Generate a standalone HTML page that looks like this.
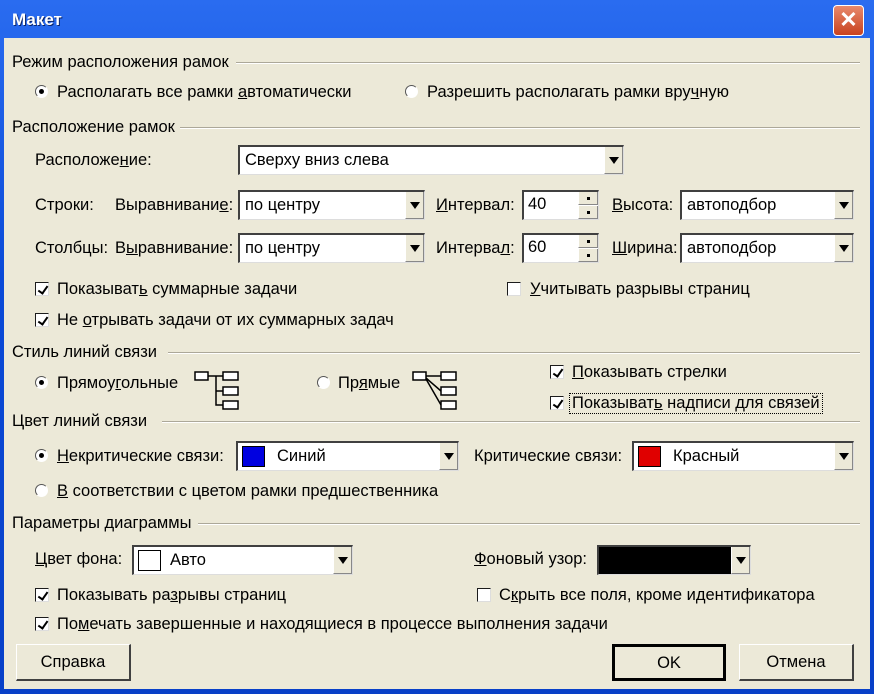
<!DOCTYPE html>
<html><head><meta charset="utf-8"><style>
*{box-sizing:border-box}
body{margin:0;width:874px;height:694px;overflow:hidden;background:#0a3fbf;font-family:"Liberation Sans",sans-serif;font-size:16.5px;color:#000}
.win{position:absolute;left:0;top:0;width:874px;height:694px;background:linear-gradient(#2a6cf0,#0a4ad8 40%,#0840c8)}
.client{position:absolute;left:4px;top:38px;width:866px;height:651px;background:#ece9d8}
.t{position:absolute;white-space:nowrap;line-height:19px}
.title{position:absolute;left:12px;top:10px;color:#fff;font-weight:bold;font-size:17px;text-shadow:1px 1px #0a246a}
.close{position:absolute;left:833px;top:5px;width:31px;height:31px;border:1px solid #fff;border-radius:4px;background:linear-gradient(#e8896c,#c8421f);color:#fff;font-weight:bold;font-size:22px;text-align:center;line-height:28px}
.hl{position:absolute;height:2px;border-top:1px solid #aca899;border-bottom:1px solid #fff}
.combo{position:absolute;background:#fff;border:1px solid #ddd;border-top:2px solid #404040;border-left:2px solid #404040}
.combo .dd{position:absolute;right:0;top:0;bottom:0;width:19px;background:#ece9d8;border-left:1px solid #fff;border-right:1px solid #888;border-bottom:1px solid #888}
.combo .dd:after{content:"";position:absolute;left:4px;top:10px;border-left:5px solid transparent;border-right:5px solid transparent;border-top:7px solid #000}
.combo span{position:absolute;left:5px;top:4px;line-height:19px}
.sw{position:absolute;left:4px;top:3px;width:23px;height:21px;border:1px solid #000}
.cb{position:absolute;width:14px;height:14px;border:1px solid #1c1c1c;border-right-color:#ddd;border-bottom-color:#ddd;background:#fff}
.cb.on:after{content:"";position:absolute;left:1px;top:1px;width:8px;height:4px;border-left:2.5px solid #000;border-bottom:2.5px solid #000;transform:rotate(-55deg) translate(-1px,2px)}
.rb{position:absolute;width:13px;height:13px;border-radius:50%;border:1px solid #555;border-right-color:#fff;border-bottom-color:#fff;background:#fff}
.rb.on:after{content:"";position:absolute;left:3px;top:3px;width:5px;height:5px;border-radius:50%;background:#000}
.btn{position:absolute;background:#ece9d8;border:1px solid #fff;border-right:2px solid #404040;border-bottom:2px solid #404040;text-align:center;line-height:34px}
.spin{position:absolute;background:#fff;border-top:2px solid #404040;border-left:2px solid #404040;border-right:1px solid #ddd;border-bottom:1px solid #ddd}
.spin span{position:absolute;left:4px;top:3px}
.spin .b{position:absolute;right:0;width:20px;height:13px;background:#ece9d8;border-left:1px solid #fff;border-right:1px solid #888;border-bottom:1px solid #888}
.spin .b:after{content:"";position:absolute;left:8px;top:5px;width:3px;height:3px;background:#000}
</style></head><body>
<div class="win">
<div class="title">Макет</div>
<div class="close">✕</div>
<div class="client"></div>

<div class="t" style="left:12px;top:53px">Режим расположения рамок</div><div class="hl" style="left:236px;top:62px;width:624px"></div>
<div class="rb on" style="left:35px;top:85px"></div><div class="t" style="left:57px;top:83px">Располагать все рамки <u>а</u>втоматически</div>
<div class="rb" style="left:405px;top:85px"></div><div class="t" style="left:427px;top:83px">Разрешить располагать рамки вру<u>ч</u>ную</div>

<div class="t" style="left:12px;top:118px">Расположение рамок</div><div class="hl" style="left:180px;top:127px;width:680px"></div>
<div class="t" style="left:35px;top:151px">Расположе<u>н</u>ие:</div>
<div class="combo" style="left:238px;top:145px;width:386px;height:30px"><span>Сверху вниз слева</span><div class="dd"></div></div>

<div class="t" style="left:35px;top:196px">Строки:</div><div class="t" style="left:115px;top:196px">Выравнивани<u>е</u>:</div>
<div class="combo" style="left:238px;top:190px;width:187px;height:30px"><span>по центру</span><div class="dd"></div></div>
<div class="t" style="left:436px;top:196px"><u>И</u>нтервал:</div>
<div class="spin" style="left:522px;top:190px;width:77px;height:30px"><span>40</span><div class="b" style="top:0"></div><div class="b" style="top:14px"></div></div>
<div class="t" style="left:612px;top:196px"><u>В</u>ысота:</div>
<div class="combo" style="left:680px;top:190px;width:174px;height:30px"><span>автоподбор</span><div class="dd"></div></div>

<div class="t" style="left:35px;top:239px">Столбцы:</div><div class="t" style="left:115px;top:239px">В<u>ы</u>равнивание:</div>
<div class="combo" style="left:238px;top:233px;width:187px;height:30px"><span>по центру</span><div class="dd"></div></div>
<div class="t" style="left:436px;top:239px">Интерва<u>л</u>:</div>
<div class="spin" style="left:522px;top:233px;width:77px;height:30px"><span>60</span><div class="b" style="top:0"></div><div class="b" style="top:14px"></div></div>
<div class="t" style="left:612px;top:239px"><u>Ш</u>ирина:</div>
<div class="combo" style="left:680px;top:233px;width:174px;height:30px"><span>автоподбор</span><div class="dd"></div></div>

<div class="cb on" style="left:35px;top:282px"></div><div class="t" style="left:57px;top:280px">Показыват<u>ь</u> суммарные задачи</div>
<div class="cb" style="left:507px;top:282px"></div><div class="t" style="left:530px;top:280px"><u>У</u>читывать разрывы страниц</div>
<div class="cb on" style="left:35px;top:313px"></div><div class="t" style="left:57px;top:311px">Не <u>о</u>трывать задачи от их суммарных задач</div>

<div class="t" style="left:12px;top:343px">Стиль линий связи</div><div class="hl" style="left:168px;top:352px;width:692px"></div>
<div class="rb on" style="left:35px;top:376px"></div><div class="t" style="left:57px;top:374px">Прямоу<u>г</u>ольные</div>
<svg style="position:absolute;left:193px;top:369px" width="50" height="44" fill="#fff" stroke="#000" stroke-width="1.5"><rect x="2" y="3" width="13" height="8"/><rect x="30" y="3" width="15" height="8"/><rect x="30" y="18" width="15" height="8"/><rect x="30" y="32" width="15" height="8"/><path d="M15 7H30M23 7V36H30M23 22H30" fill="none"/></svg>
<div class="rb" style="left:317px;top:376px"></div><div class="t" style="left:338px;top:374px">Пр<u>я</u>мые</div>
<svg style="position:absolute;left:411px;top:369px" width="50" height="44" fill="#fff" stroke="#000" stroke-width="1.5"><rect x="2" y="3" width="13" height="8"/><rect x="30" y="3" width="15" height="8"/><rect x="30" y="18" width="15" height="8"/><rect x="30" y="32" width="15" height="8"/><path d="M15 7H30M15 9L30 22M15 10L30 36" fill="none"/></svg>
<div class="cb on" style="left:550px;top:365px"></div><div class="t" style="left:572px;top:363px"><u>П</u>оказывать стрелки</div>
<div class="cb on" style="left:550px;top:396px"></div><div class="t" style="left:569px;top:393px;border:1px dotted #000;padding:0 2px">Показыват<u>ь</u> надписи для связей</div>

<div class="t" style="left:12px;top:412px">Цвет линий связи</div><div class="hl" style="left:162px;top:421px;width:698px"></div>
<div class="rb on" style="left:35px;top:449px"></div><div class="t" style="left:57px;top:447px"><u>Н</u>екритические связи:</div>
<div class="combo" style="left:236px;top:441px;width:223px;height:30px"><div class="sw" style="background:#0000e0"></div><span style="left:39px">Синий</span><div class="dd"></div></div>
<div class="t" style="left:474px;top:447px">Критические связи:</div>
<div class="combo" style="left:632px;top:441px;width:222px;height:30px"><div class="sw" style="background:#e00000"></div><span style="left:39px">Красный</span><div class="dd"></div></div>
<div class="rb" style="left:35px;top:484px"></div><div class="t" style="left:57px;top:482px"><u>В</u> соответствии с цветом рамки предшественника</div>

<div class="t" style="left:12px;top:514px">Параметры диаграммы</div><div class="hl" style="left:198px;top:523px;width:662px"></div>
<div class="t" style="left:35px;top:550px"><u>Ц</u>вет фона:</div>
<div class="combo" style="left:132px;top:545px;width:221px;height:30px"><div class="sw" style="background:#fff"></div><span style="left:36px">Авто</span><div class="dd"></div></div>
<div class="t" style="left:474px;top:550px"><u>Ф</u>оновый узор:</div>
<div class="combo" style="left:597px;top:545px;width:154px;height:30px;background:#000"><div class="dd"></div></div>
<div class="cb on" style="left:35px;top:588px"></div><div class="t" style="left:57px;top:586px">Показывать ра<u>з</u>рывы страниц</div>
<div class="cb" style="left:477px;top:588px"></div><div class="t" style="left:499px;top:586px">С<u>к</u>рыть все поля, кроме идентификатора</div>
<div class="cb on" style="left:35px;top:617px"></div><div class="t" style="left:57px;top:615px">По<u>м</u>ечать завершенные и находящиеся в процессе выполнения задачи</div>

<div class="btn" style="left:16px;top:644px;width:115px;height:37px">Справка</div>
<div class="btn" style="left:612px;top:644px;width:114px;height:37px;border:2px solid #000;outline:1px solid #000;outline-offset:-3px">OK</div>
<div class="btn" style="left:739px;top:644px;width:115px;height:37px">Отмена</div>
</div>
</body></html>
